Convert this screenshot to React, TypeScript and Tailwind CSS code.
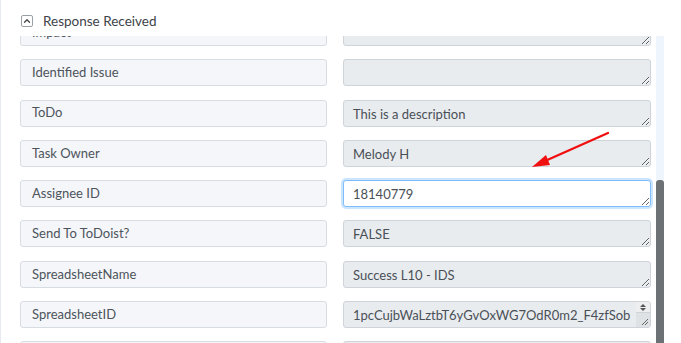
import { ChevronUp } from 'lucide-react';

const rows: { label: string; value: string; focused?: boolean; scroll?: boolean }[] = [
  { label: 'Impact', value: '' },
  { label: 'Identified Issue', value: '' },
  { label: 'ToDo', value: 'This is a description' },
  { label: 'Task Owner', value: 'Melody H' },
  { label: 'Assignee ID', value: '18140779', focused: true },
  { label: 'Send To ToDoist?', value: 'FALSE' },
  { label: 'SpreadsheetName', value: 'Success L10 - IDS' },
  { label: 'SpreadsheetID', value: '1pcCujbWaLztbT6yGvOxWG7OdR0m2_F4zfSob1AlVZIkqWm', scroll: true },
  { label: 'Spreadsheet URL', value: '' },
];

export default function App() {
  return (
    <div className="relative h-[343px] w-[681px] overflow-hidden border-l border-[#e6e9ed] bg-white font-['Lato',sans-serif]">
      {/* Header */}
      <div className="flex h-[36px] items-center gap-[10px] pl-[20px] pt-[6px]">
        <span className="flex h-[12px] w-[12px] items-center justify-center rounded-[2px] border border-[#9aa0a6] text-[#444]">
          <ChevronUp size={10} strokeWidth={3} />
        </span>
        <span className="text-[13.5px] text-[#3d4349]">Response Received</span>
      </div>

      <div className="flex h-[307px]">
        {/* Mapping rows */}
        <div className="h-full w-[655px] overflow-hidden">
          <div className="-mt-[17px] grid grid-cols-[307px_308px] gap-x-[16px] gap-y-[13.3px] pl-[19px]">
            {rows.map((r) => (
              <Row key={r.label} {...r} />
            ))}
          </div>
        </div>

        {/* Scrollbar */}
        <div className="flex h-full w-[8px] flex-col">
          <div className="h-[144px] bg-[#eef5fd]" />
          <div className="flex-1 rounded-t-[3px] bg-[#6c7176]" />
        </div>
      </div>

      {/* Red pointer arrow */}
      <svg className="absolute left-0 top-0" width="681" height="343">
        <line x1="607" y1="133" x2="544" y2="161" stroke="#f01010" strokeWidth="2.4" strokeLinecap="round" />
        <polygon points="531,167 545,155 549,165" fill="#f01010" />
      </svg>
    </div>
  );
}

function Row({
  label,
  value,
  focused,
  scroll,
}: {
  label: string;
  value: string;
  focused?: boolean;
  scroll?: boolean;
}) {
  const base =
    'block h-[27px] w-full resize-y overflow-hidden rounded-[3px] border pl-[9px] py-[3px] text-[13px] leading-[20px] text-[#495057] outline-none';
  return (
    <>
      <div className="flex h-[27px] items-center rounded-[3px] border border-[#d8dde3] bg-[#f4f6f9] px-[11px] text-[13px] text-[#4d545b]">
        {label}
      </div>
      <div className="relative">
        <textarea
          readOnly
          value={value}
          className={
            focused
              ? `${base} border-[#80bdff] bg-white pr-[10px] shadow-[0_0_0_2px_rgba(0,123,255,0.2)]`
              : scroll
                ? `${base} border-[#ced4da] bg-[#e9ecef] pr-[16px]`
                : `${base} border-[#ced4da] bg-[#e9ecef] pr-[10px]`
          }
        />
        {scroll && (
          <div className="absolute bottom-[1px] right-[1px] top-[1px] flex w-[14px] flex-col rounded-r-[2px] bg-[#eceef0]">
            <div className="flex h-[11px] flex-col items-center justify-center gap-[1px] border-b border-[#cfd3d7]">
              <span className="h-0 w-0 border-x-[3px] border-b-[3px] border-x-transparent border-b-[#555]" />
              <span className="h-0 w-0 border-x-[3px] border-t-[3px] border-x-transparent border-t-[#555]" />
            </div>
            <div className="relative flex-1 bg-[#dfe2e5]">
              <svg className="absolute bottom-[1px] right-[1px]" width="9" height="9">
                <line x1="8" y1="2" x2="2" y2="8" stroke="#666" strokeWidth="1" />
                <line x1="8" y1="5" x2="5" y2="8" stroke="#666" strokeWidth="1" />
              </svg>
            </div>
          </div>
        )}
      </div>
    </>
  );
}
